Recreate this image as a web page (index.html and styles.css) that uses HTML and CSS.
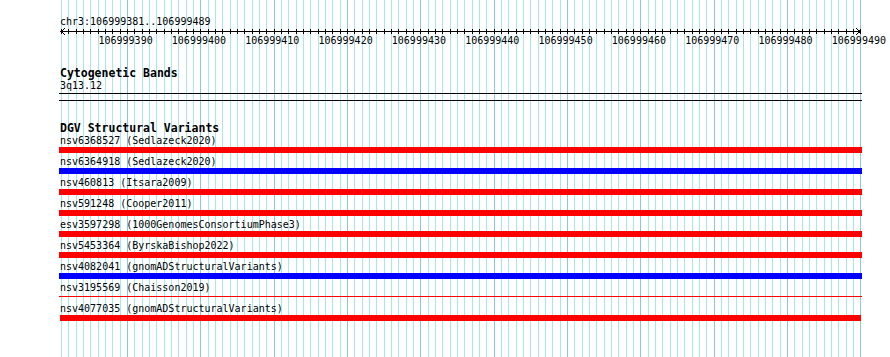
FILE: index.html
```html
<!DOCTYPE html>
<html lang="en">
<head>
  <meta charset="UTF-8">
  <meta name="viewport" content="width=device-width, initial-scale=1.0">
  <title>chr3:106999381..106999489</title>
  <link rel="stylesheet" href="styles.css">
</head>
<body>
  <div class="page">
    <div class="position">chr3:106999381..106999489</div>
    <div class="ruler">
      <svg width="803" height="7" viewBox="0 0 803 7">
        <line x1="1" y1="3.5" x2="802" y2="3.5" stroke="#000" stroke-width="1"/>
        <polyline points="6,0.5 1.5,3.5 6,6.5" fill="none" stroke="#000" stroke-width="1"/>
        <polyline points="797,0.5 801.5,3.5 797,6.5" fill="none" stroke="#000" stroke-width="1"/>
      </svg>
    </div>
    <div class="scale">
      <span>106999390</span>
      <span>106999400</span>
      <span>106999410</span>
      <span>106999420</span>
      <span>106999430</span>
      <span>106999440</span>
      <span>106999450</span>
      <span>106999460</span>
      <span>106999470</span>
      <span>106999480</span>
      <span>106999490</span>
    </div>

    <div class="track-title">Cytogenetic Bands</div>
    <div class="label">3q13.12</div>
    <div class="band"></div>

    <div class="track-title">DGV Structural Variants</div>
    <div class="items">
      <div class="item">
        <div class="label">nsv6368527 (Sedlazeck2020)</div>
        <div class="bar loss"></div>
      </div>
      <div class="item">
        <div class="label">nsv6364918 (Sedlazeck2020)</div>
        <div class="bar gain"></div>
      </div>
      <div class="item">
        <div class="label">nsv460813 (Itsara2009)</div>
        <div class="bar loss"></div>
      </div>
      <div class="item">
        <div class="label">nsv591248 (Cooper2011)</div>
        <div class="bar loss"></div>
      </div>
      <div class="item">
        <div class="label">esv3597298 (1000GenomesConsortiumPhase3)</div>
        <div class="bar loss"></div>
      </div>
      <div class="item">
        <div class="label">nsv5453364 (ByrskaBishop2022)</div>
        <div class="bar loss"></div>
      </div>
      <div class="item">
        <div class="label">nsv4082041 (gnomADStructuralVariants)</div>
        <div class="bar gain"></div>
      </div>
      <div class="item">
        <div class="label">nsv3195569 (Chaisson2019)</div>
        <div class="bar thin"></div>
      </div>
      <div class="item">
        <div class="label">nsv4077035 (gnomADStructuralVariants)</div>
        <div class="bar loss short"></div>
      </div>
    </div>
  </div>
</body>
</html>
```

FILE: styles.css
```css
body {
  margin: 0;
  background-color: #fff;
  font-family: "DejaVu Sans Mono", monospace;
  font-size: 10px;
  color: #000;
}

/* track area: x 59..862, guide lines every base, darker every 10 */
.page {
  box-sizing: border-box;
  margin-left: 59px;
  width: 803px;
  height: 357px;
  padding-top: 15px;
  background-image:
    linear-gradient(to right, #8cc6e6 0 1px, transparent 1px 73px, #8cc6e6 73px 74px, transparent 74px 147px, #8cc6e6 147px 148px, transparent 148px),
    linear-gradient(to right, #a6e8ee 0 1px, transparent 1px 7px, #a6e8ee 7px 8px, transparent 8px 15px, #a6e8ee 15px 16px, transparent 16px);
  background-size: 220px 100%, 22px 100%;
  background-position: 68px 0, 2px 0;
  background-repeat: repeat-x;
}

.position {
  line-height: 13px;
  padding-left: 1px;
}

.ruler {
  height: 7px;
  background-image: linear-gradient(to right, #000 0 1px, transparent 1px 7px, #000 7px 8px, transparent 8px 15px, #000 15px 16px, transparent 16px);
  background-size: 22px 5px;
  background-position: 2px 1px;
  background-repeat: repeat-x;
}

.ruler svg {
  display: block;
  shape-rendering: crispEdges;
}

.scale {
  display: flex;
  gap: 19.333px;
  padding-left: 39.5px;
  line-height: 11px;
}

.scale span {
  flex: none;
  width: 54px;
  white-space: nowrap;
}

.track-title {
  margin-top: 20px;
  padding-left: 1px;
  font-size: 11.5px;
  font-weight: bold;
  line-height: 14px;
}

.label {
  padding-left: 1px;
  line-height: 11px;
  white-space: nowrap;
}

.band {
  height: 6px;
  margin-top: 2px;
  border-top: 1px solid #000;
  border-bottom: 1px solid #000;
}

.item {
  margin-bottom: 3px;
}

.item .label {
  margin-bottom: 1px;
}

.bar {
  height: 6px;
}

.bar.loss {
  background-color: #f00;
}

.bar.gain {
  background-color: #00f;
}

.bar.thin {
  background: linear-gradient(#f00, #f00) 0 2px / 100% 1px no-repeat;
}

.bar.short {
  margin: 0 1px;
}
```
